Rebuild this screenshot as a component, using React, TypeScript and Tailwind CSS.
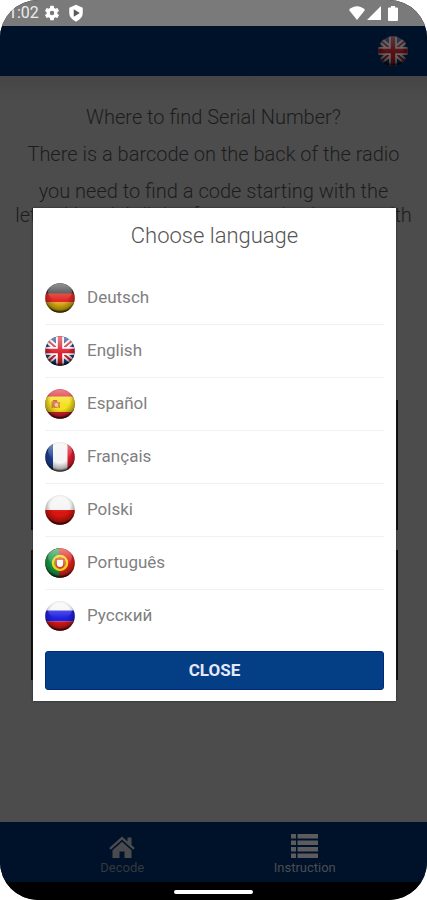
import React, { useId } from 'react';

type FlagCode = 'de' | 'en' | 'es' | 'fr' | 'pl' | 'pt' | 'ru';

interface Language {
  code: FlagCode;
  name: string;
}

const languages: Language[] = [
  { code: 'de', name: 'Deutsch' },
  { code: 'en', name: 'English' },
  { code: 'es', name: 'Español' },
  { code: 'fr', name: 'Français' },
  { code: 'pl', name: 'Polski' },
  { code: 'pt', name: 'Português' },
  { code: 'ru', name: 'Русский' },
];

// every flag is drawn on a 30x30 square and clipped to a ball
const flagArt: Record<FlagCode, React.ReactNode> = {
  de: (
    <>
      <path fill="#3a3a3a" d="M0 0h30v11H0z" />
      <path fill="#e02a22" d="M0 10.5h30v9H0z" />
      <path fill="#d9b010" d="M0 19.5h30V30H0z" />
    </>
  ),
  en: (
    <>
      <path fill="#1f3f8c" d="M0 0h30v30H0z" />
      <path stroke="#fff" strokeWidth="6" d="M1 3l28 24M29 3L1 27" />
      <path stroke="#d8202c" strokeWidth="2" d="M1 3l28 24M29 3L1 27" />
      <path stroke="#fff" strokeWidth="8" d="M15 0v30M0 15h30" />
      <path stroke="#dc2030" strokeWidth="4.4" d="M15 0v30M0 15h30" />
    </>
  ),
  es: (
    <>
      <path fill="#dc1f2c" d="M0 0h30v30H0z" />
      <path fill="#f4e01c" d="M0 7.5h30v15.5H0z" />
      <path fill="#d98a2c" d="M6.500 12h1.500v7H6.500zM13.500 13h1.500v6h-1.500z" />
      <circle cx="10.500" cy="15.500" r="3.600" fill="#d9763a" />
      <circle cx="11.500" cy="16" r="2" fill="#e8c5b0" />
      <path fill="#c8502b" d="M8 11h4v1.500H8z" />
    </>
  ),
  fr: (
    <>
      <path fill="#f4f4f4" d="M0 0h30v30H0z" />
      <path fill="#1d3f94" d="M0 0h8v30H0z" />
      <path fill="#e01c30" d="M22.5 0H30v30h-7.5z" />
    </>
  ),
  pl: (
    <>
      <path fill="#f4f4f4" d="M0 0h30v15H0z" />
      <path fill="#d8160f" d="M0 15h30v15H0z" />
    </>
  ),
  pt: (
    <>
      <path fill="#e0221c" d="M0 0h30v30H0z" />
      <path fill="#189a48" d="M0 0h14v30H0z" />
      <circle cx="15" cy="15" r="7" fill="none" stroke="#f0d820" strokeWidth="2.5" />
      <circle cx="15" cy="15" r="5.5" fill="#c9a428" />
      <path fill="#e0381e" d="M10.5 10.5h9V16c0 2.8-2 4.5-4.5 4.5S10.5 18.8 10.500 16z" />
      <path fill="#fff" d="M11.800 11.800h6.400V16c0 1.900-1.400 3-3.200 3s-3.200-1.100-3.200-3z" />
    </>
  ),
  ru: (
    <>
      <path fill="#f6f6f6" d="M0 0h30v10H0z" />
      <path fill="#2020e0" d="M0 9.5h30v11H0z" />
      <path fill="#e01818" d="M0 20.5h30V30H0z" />
    </>
  ),
};

const Flag: React.FC<{ code: FlagCode }> = ({ code }) => {
  const id = useId();
  return (
    <svg className="h-[30px] w-[30px] shrink-0" viewBox="0 0 30 30" aria-hidden="true">
      <defs>
        <clipPath id={`${id}-ball`}>
          <circle cx="15" cy="15" r="14.8" />
        </clipPath>
        <radialGradient id={`${id}-shade`} cx="50%" cy="38%" r="62%">
          <stop offset="0.5" stopColor="#000" stopOpacity="0" />
          <stop offset="0.82" stopColor="#000" stopOpacity="0.3" />
          <stop offset="1" stopColor="#000" stopOpacity="1" />
        </radialGradient>
        <linearGradient id={`${id}-shine`} x1="0" y1="0" x2="0" y2="1">
          <stop offset="0" stopColor="#fff" stopOpacity="0.45" />
          <stop offset="1" stopColor="#fff" stopOpacity="0" />
        </linearGradient>
      </defs>
      <g clipPath={`url(#${id}-ball)`}>
        {flagArt[code]}
        <path fill={`url(#${id}-shade)`} d="M0 0h30v30H0z" />
        <ellipse cx="15" cy="9" rx="12" ry="8.5" fill={`url(#${id}-shine)`} />
      </g>
    </svg>
  );
};

const StatusBar: React.FC = () => (
  <div className="flex h-[26px] items-center bg-[#7a7a7a] pr-[29px] pl-2 text-white">
    <span className="text-base leading-7 text-[#ececec]">1:02</span>
    <svg className="ml-1 h-[18px] w-[18px]" viewBox="0 0 24 24" fill="currentColor" aria-hidden="true">
      <path d="M19.14 12.94a7.5 7.5 0 0 0 0-1.88l2.03-1.58a.5.5 0 0 0 .12-.61l-1.92-3.32a.5.5 0 0 0-.59-.22l-2.39.96a7 7 0 0 0-1.62-.94l-.36-2.54a.5.5 0 0 0-.48-.41h-3.84a.5.5 0 0 0-.47.41l-.36 2.54a7 7 0 0 0-1.62.94l-2.39-.96a.5.5 0 0 0-.59.22L2.74 8.87a.5.5 0 0 0 .12.61l2.03 1.58a7.5 7.5 0 0 0 0 1.88l-2.03 1.58a.5.5 0 0 0-.12.61l1.92 3.32c.12.22.37.29.59.22l2.39-.96a7 7 0 0 0 1.62.94l.36 2.54c.05.24.24.41.48.41h3.84c.24 0 .44-.17.47-.41l.36-2.54a7 7 0 0 0 1.62-.94l2.39.96c.22.08.47 0 .59-.22l1.92-3.32a.5.5 0 0 0-.12-.61zM12 15a3 3 0 1 1 0-6 3 3 0 0 1 0 6z" />
    </svg>
    <svg className="ml-1.5 h-[18px] w-[18px]" viewBox="0 0 24 24" aria-hidden="true">
      <path fill="currentColor" d="M12 1l9 4v7c0 5-3.8 9-9 11.5C6.8 21 3 17 3 12V5z" />
      <path fill="#5a5a5a" d="M9 7l8 5-8 5z" />
    </svg>
    <svg className="ml-auto h-[14px] w-[16px]" viewBox="0 0 16 14" fill="currentColor" aria-hidden="true">
      <path d="M8 14L0 4c4.5-5 11.5-5 16 0z" />
    </svg>
    <svg className="ml-0.5 h-[14px] w-[14px]" viewBox="0 0 14 14" fill="currentColor" aria-hidden="true">
      <path d="M14 0v14H0z" />
    </svg>
    <svg className="ml-[7px] h-[15px] w-[10px]" viewBox="0 0 10 15" fill="currentColor" aria-hidden="true">
      <path d="M3 0h4v1.500h2q1 0 1 1V14q0 1-1 1H1q-1 0-1-1V2.500q0-1 1-1h2z" />
    </svg>
  </div>
);

const Instruction: React.FC = () => (
  <main className="flex flex-1 flex-col bg-[linear-gradient(#454545,#4c4c4c_24px)] px-3 pt-[29px] text-center text-xl leading-6 font-light text-[#1c1c1c]">
    <h1>Where to find Serial Number?</h1>
    <p className="mt-[13px]">There is a barcode on the back of the radio</p>
    <p className="mt-[13px]">
      you need to find a code starting with the
      <br />
      letter V and 4 digits, for example, the one with
    </p>
    {/* radio label photos */}
    <div className="mt-[173px] mr-[17px] ml-[19px] h-[130px] bg-[#0c0c0c]" />
    <div className="mt-5 mr-[17px] ml-[19px] h-[130px] bg-[#0c0c0c]" />
  </main>
);

const BottomNav: React.FC = () => (
  <nav className="grid h-[60px] grid-cols-2 bg-[#001229] px-[31px] text-[13px] text-[#34383e]">
    <button type="button" className="flex flex-col items-center pt-3">
      <svg className="h-[26px] w-[26px]" viewBox="0 0 26 26" fill="#4a4b4e" aria-hidden="true">
        <path d="M13 2.500l5.500 5V3.500h4v7.600l3.300 3-1.500 1.700L13 5.700 1.700 15.800.2 14.100z" />
        <path d="M13 7.700l9.500 8.500V24h-7v-6.500h-5V24h-7v-7.800z" />
      </svg>
      <span className="leading-4">Decode</span>
    </button>
    <button type="button" className="flex flex-col items-center pt-3 text-[#4a4d53]">
      <svg className="h-[26px] w-[27px]" viewBox="0 0 27 26" fill="#5c5c60" aria-hidden="true">
        <path d="M0 0h5v4.500H0zM6.500 0H27v4.500H6.500zM0 6.500h5V11H0zM6.500 6.500H27V11H6.500zM0 13h5v4.500H0zM6.500 13H27v4.500H6.500zM0 19.500h5V24H0zM6.500 19.500H27V24H6.500z" />
      </svg>
      <span className="leading-4">Instruction</span>
    </button>
  </nav>
);

const LanguageDialog: React.FC = () => (
  <div
    role="dialog"
    aria-modal="true"
    aria-labelledby="language-title"
    className="absolute top-[208px] right-[31px] left-[33px] bg-white px-3 pt-3 pb-[11px] shadow-[0_0_2px_#222]"
  >
    <h2 id="language-title" className="pb-5 text-center text-[22px] leading-8 font-light text-[#555]">
      Choose language
    </h2>
    <ul className="divide-y divide-[#f0f1f2]">
      {languages.map((language) => (
        <li key={language.code}>
          <button type="button" className="flex h-[52px] w-full items-center gap-3 text-[17px] text-[#808080]">
            <Flag code={language.code} />
            {language.name}
          </button>
        </li>
      ))}
    </ul>
    <button
      type="button"
      className="mt-[9px] h-[39px] w-full rounded-[3px] border border-[#002a80] bg-[#043f86] text-[17px] font-bold text-[#e6e8fa]"
    >
      CLOSE
    </button>
  </div>
);

const App: React.FC = () => {
  return (
    <div className="bg-white font-[Roboto,sans-serif]">
      <div className="relative flex min-h-screen flex-col overflow-hidden rounded-[38px] bg-black">
        <StatusBar />
        <header className="flex h-[50px] items-center justify-end bg-[#001229] pr-[19px]">
          <button type="button" aria-label="Language" className="brightness-40">
            <Flag code="en" />
          </button>
        </header>
        <Instruction />
        <BottomNav />
        <div className="flex h-[18px] items-center justify-center bg-black pt-0.5">
          <div className="h-1 w-[79px] rounded-full bg-white" />
        </div>
        <LanguageDialog />
      </div>
    </div>
  );
};

export default App;
